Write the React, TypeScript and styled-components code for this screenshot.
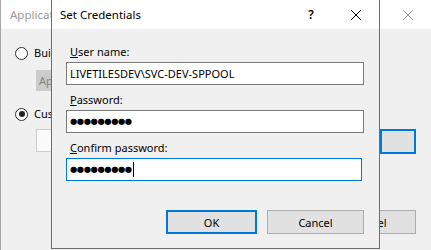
import React from "react";
import styled, { createGlobalStyle, css } from "styled-components";

const Global = createGlobalStyle`
  html, body { margin: 0; padding: 0; background: #f0f0f0; }
  * { box-sizing: border-box; }
`;

const FONT = `"Noto Sans", "Open Sans", sans-serif`;

const Screen = styled.div`
  position: relative;
  width: 431px;
  height: 250px;
  overflow: hidden;
  background: #f0f0f0;
  font-family: ${FONT};
  font-size: 11px;
  color: #000;
`;

/* ---------- background window ---------- */
const BgWindow = styled.div`
  display: flex;
  flex-direction: column;
  height: 100%;
  border-left: 1px solid #a8a8a8;
`;

const BgTitleBar = styled.div`
  height: 29px;
  flex: none;
  background: #fff;
  display: flex;
  align-items: center;
  justify-content: space-between;
  padding-left: 9px;
`;

const BgTitle = styled.span`
  color: #9a9a9a;
  font-size: 11.5px;
  white-space: nowrap;
`;

const CloseBox = styled.div<{ $w?: number }>`
  width: ${(p) => p.$w ?? 46}px;
  height: 29px;
  display: flex;
  align-items: center;
  justify-content: center;
`;

const BgBody = styled.div`
  flex: 1;
  display: flex;
  flex-direction: column;
  padding: 16px 15px 16px 14px;
`;

const RadioRow = styled.div<{ $top?: number }>`
  display: flex;
  align-items: center;
  gap: 6px;
  height: 16px;
  margin-top: ${(p) => p.$top ?? 0}px;
`;

const Radio = styled.span<{ $checked?: boolean }>`
  position: relative;
  width: 13px;
  height: 13px;
  border-radius: 50%;
  border: 1px solid #333;
  background: #fff;
  flex: none;
  ${(p) =>
    p.$checked &&
    css`
      &::after {
        content: "";
        position: absolute;
        left: 2.5px;
        top: 2.5px;
        width: 6px;
        height: 6px;
        border-radius: 50%;
        background: #222;
      }
    `}
`;

const RadioLabel = styled.span`
  white-space: nowrap;
  line-height: 16px;
`;

const DisabledSelect = styled.div`
  margin: 9px 0 0 21px;
  height: 21px;
  width: 300px;
  background: #cccccc;
  color: #838383;
  padding-left: 3px;
  line-height: 21px;
`;

const AccountRow = styled.div`
  display: flex;
  gap: 8px;
  margin: 7px 0 0 21px;
`;

const AccountBox = styled.div`
  flex: 1;
  height: 23px;
  background: #fbfbfb;
  border: 1px solid #cccccc;
`;

const BgButton = styled.div<{ $primary?: boolean; $w: number; $h?: number }>`
  width: ${(p) => p.$w}px;
  height: ${(p) => p.$h ?? 24}px;
  background: #e1e1e1;
  border: ${(p) => (p.$primary ? "2px solid #0078d7" : "1px solid #adadad")};
  display: flex;
  align-items: center;
  justify-content: center;
  white-space: nowrap;
`;

const BgFooter = styled.div`
  margin-top: auto;
  display: flex;
  justify-content: flex-end;
  gap: 10px;
`;

/* ---------- dialog ---------- */
const Dialog = styled.div`
  position: absolute;
  left: 51px;
  top: -1px;
  width: 329px;
  height: 250px;
  border: 1px solid #6e6e6e;
  background: #f0f0f0;
  display: flex;
  flex-direction: column;
`;

const DialogTitleBar = styled.div`
  height: 29px;
  flex: none;
  background: #fff;
  display: flex;
  align-items: center;
  padding-left: 8px;
`;

const DialogTitle = styled.span`
  flex: 1;
  font-size: 11.5px;
  white-space: nowrap;
`;

const HelpGlyph = styled.span`
  font-size: 12px;
  font-weight: 600;
`;

const DialogBody = styled.div`
  flex: 1;
  display: flex;
  flex-direction: column;
  padding: 15px 15px 0 14px;
`;

const Field = styled.div`
  display: flex;
  flex-direction: column;
  & + & {
    margin-top: 7px;
  }
`;

const Label = styled.label`
  line-height: 16px;
  height: 16px;
  padding-left: 4px;
  margin-bottom: 2px;
  white-space: nowrap;
`;

const TextBox = styled.div<{ $focused?: boolean; $inset?: number }>`
  height: 23px;
  margin-right: ${(p) => p.$inset ?? 0}px;
  background: #fff;
  border: 1px solid ${(p) => (p.$focused ? "#0078d7" : "#7a7a7a")};
  display: flex;
  align-items: center;
  padding-left: 3px;
  white-space: nowrap;
  overflow: hidden;
`;

const Dots = styled.span`
  font-family: "DejaVu Sans", sans-serif;
  font-size: 8.4px;
  letter-spacing: -0.45px;
  line-height: 1;
`;

const Caret = styled.span`
  width: 1px;
  height: 15px;
  background: #000;
  margin-left: 1px;
`;

const DialogFooter = styled.div`
  margin-top: 29px;
  display: flex;
  justify-content: flex-end;
  gap: 10px;
`;

const DialogButton = styled.button<{ $primary?: boolean; $w: number }>`
  width: ${(p) => p.$w}px;
  height: 24px;
  padding: 0;
  font: inherit;
  color: #000;
  background: #e1e1e1;
  border: ${(p) => (p.$primary ? "2px solid #0078d7" : "1px solid #adadad")};
  display: flex;
  align-items: center;
  justify-content: center;
`;

const XIcon = ({ color }: { color: string }) => (
  <svg width="10" height="10" viewBox="0 0 10 10">
    <path d="M0 0 L10 10 M10 0 L0 10" stroke={color} strokeWidth="1" fill="none" />
  </svg>
);

export default function App() {
  return (
    <>
      <Global />
      <Screen>
        <BgWindow>
          <BgTitleBar>
            <BgTitle>Application Pool Identity</BgTitle>
            <CloseBox>
              <XIcon color="#9a9a9a" />
            </CloseBox>
          </BgTitleBar>
          <BgBody>
            <RadioRow>
              <Radio />
              <RadioLabel>Built-in account:</RadioLabel>
            </RadioRow>
            <DisabledSelect>ApplicationPoolIdentity</DisabledSelect>
            <RadioRow $top={15}>
              <Radio $checked />
              <RadioLabel>Custom account:</RadioLabel>
            </RadioRow>
            <AccountRow>
              <AccountBox />
              <BgButton $primary $w={36} $h={25} />
            </AccountRow>
            <BgFooter>
              <BgButton $w={93}>OK</BgButton>
              <BgButton $w={93}>Cancel</BgButton>
            </BgFooter>
          </BgBody>
        </BgWindow>

        <Dialog>
          <DialogTitleBar>
            <DialogTitle>Set Credentials</DialogTitle>
            <CloseBox $w={44}>
              <HelpGlyph>?</HelpGlyph>
            </CloseBox>
            <CloseBox>
              <XIcon color="#000" />
            </CloseBox>
          </DialogTitleBar>
          <DialogBody>
            <Field>
              <Label>
                <u>U</u>ser name:
              </Label>
              <TextBox>LIVETILESDEV\SVC-DEV-SPPOOL</TextBox>
            </Field>
            <Field>
              <Label>
                <u>P</u>assword:
              </Label>
              <TextBox>
                <Dots>●●●●●●●●●</Dots>
              </TextBox>
            </Field>
            <Field>
              <Label>
                <u>C</u>onfirm password:
              </Label>
              <TextBox $focused $inset={2}>
                <Dots>●●●●●●●●●</Dots>
                <Caret />
              </TextBox>
            </Field>
            <DialogFooter>
              <DialogButton $primary $w={91}>
                OK
              </DialogButton>
              <DialogButton $w={97}>Cancel</DialogButton>
            </DialogFooter>
          </DialogBody>
        </Dialog>
      </Screen>
    </>
  );
}
